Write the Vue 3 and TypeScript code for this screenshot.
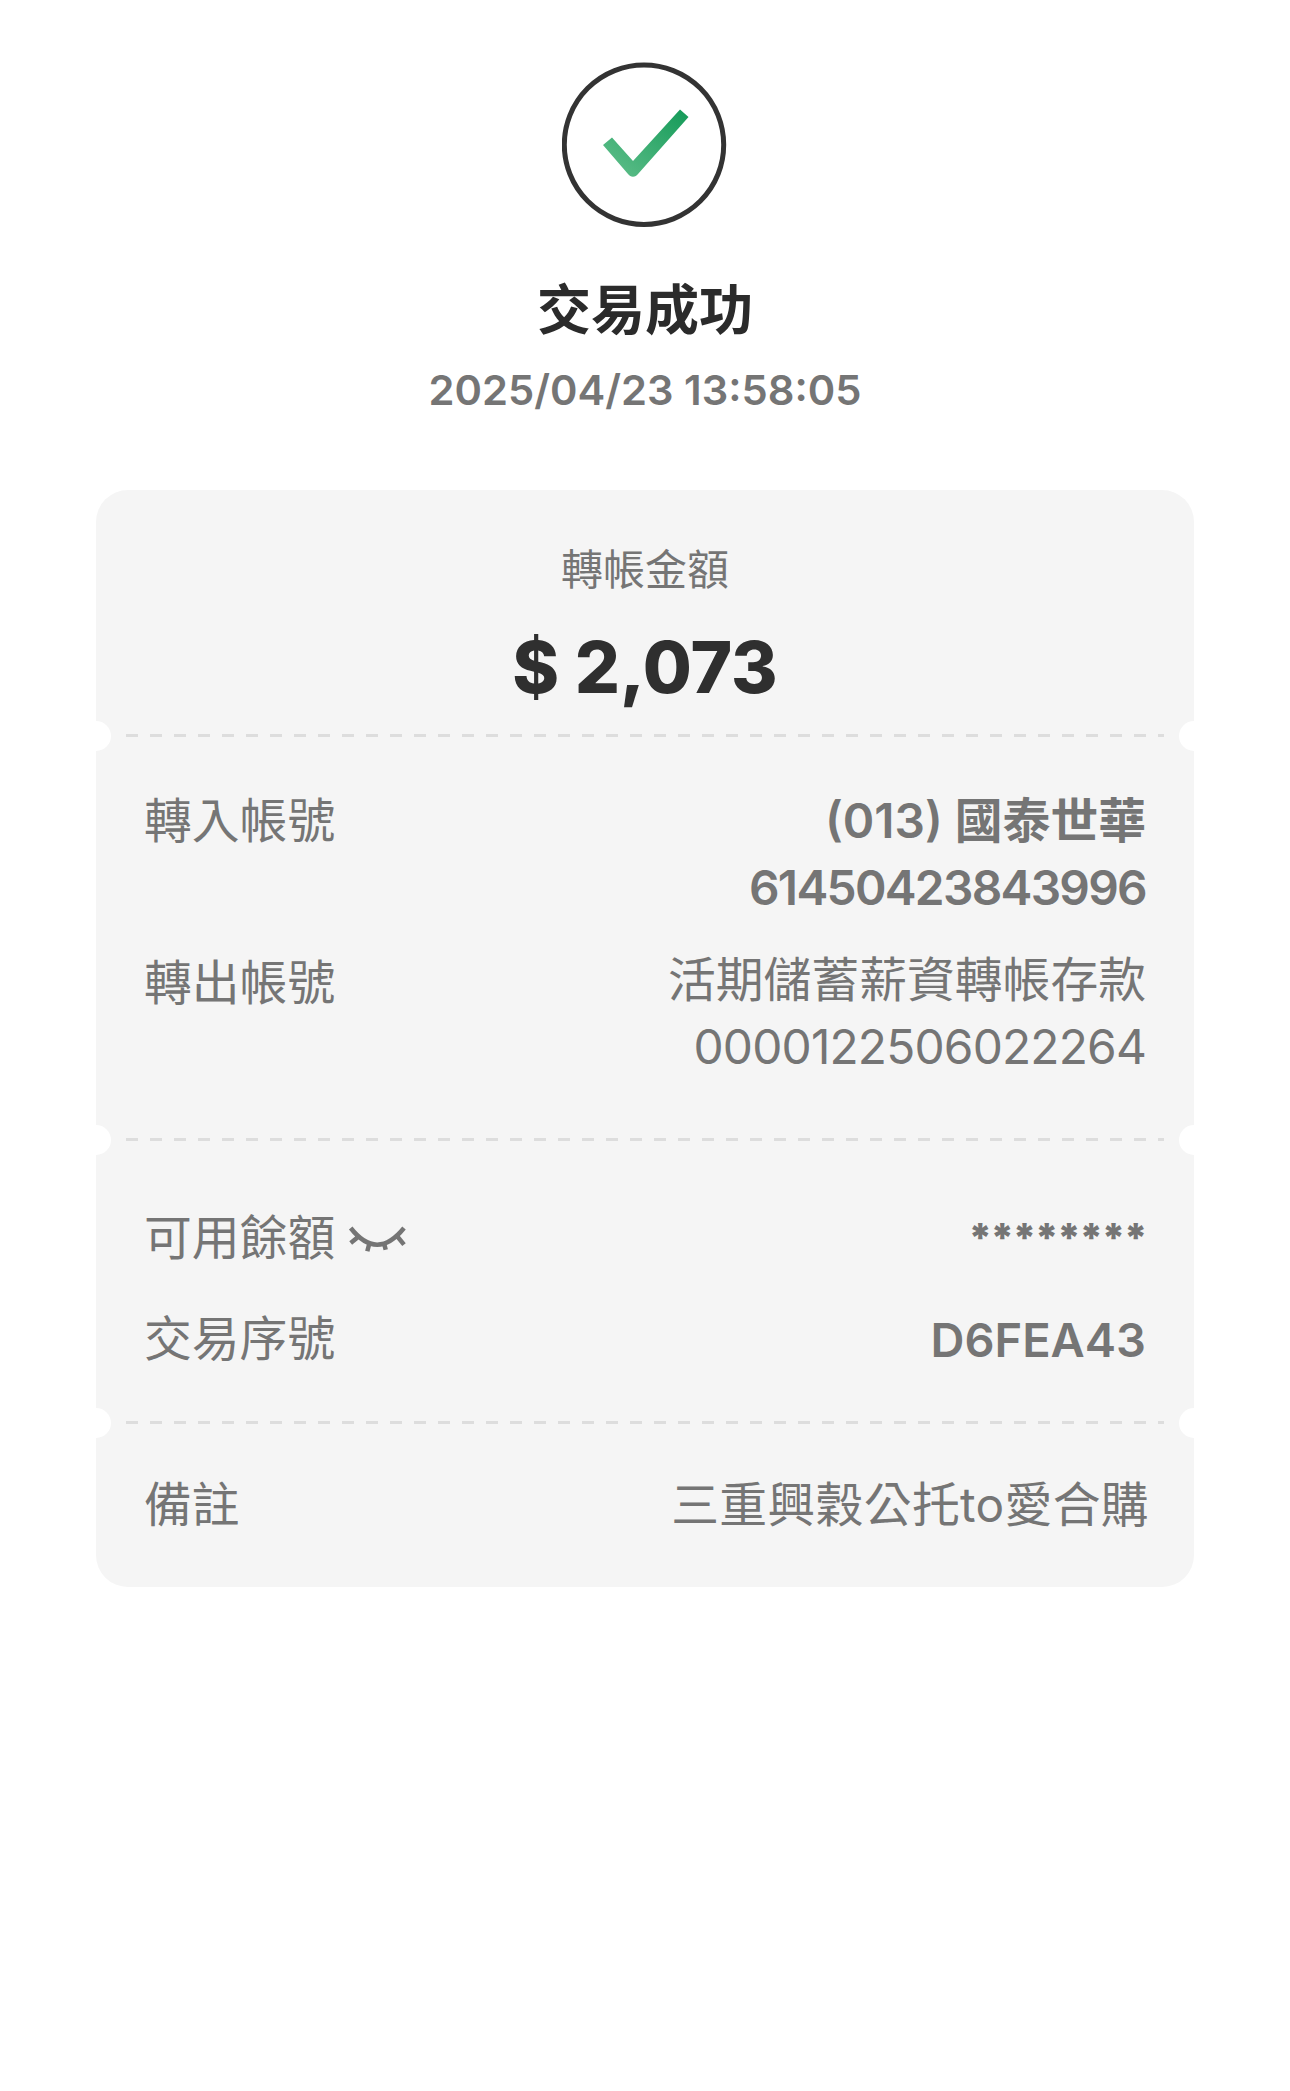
<script setup lang="ts">
const accountRows = [
  { label: '轉入帳號', lines: ['(013) 國泰世華', '61450423843996'], strong: true },
  { label: '轉出帳號', lines: ['活期儲蓄薪資轉帳存款', '0000122506022264'], strong: false },
]

const isDigits = (line: string) => /^\d+$/.test(line)
</script>

<template>
  <main class="page">
    <header class="result">
      <svg class="status-icon" viewBox="0 0 166 166" width="166" height="166">
        <defs>
          <linearGradient id="tick" x1="0" y1="1" x2="1" y2="0">
            <stop offset="0" stop-color="#62c08c" />
            <stop offset="1" stop-color="#149a58" />
          </linearGradient>
        </defs>
        <circle cx="82" cy="82.700" r="79.700" fill="#fff" stroke="#333" stroke-width="5" />
        <path d="M41 83 50 75.500 71 99 118 47.500 126.500 55 76 112a6 6 0 0 1-10 0Z" fill="url(#tick)" />
      </svg>
      <h1 class="title">交易成功</h1>
      <p class="time">2025/04/23 13:58:05</p>
    </header>

    <section class="card">
      <div class="amount">
        <div class="amount-label">轉帳金額</div>
        <div class="amount-value">$ 2,073</div>
      </div>
      <div class="divider"></div>
      <div class="accounts">
        <div v-for="row in accountRows" :key="row.label" class="row">
          <span class="label">{{ row.label }}</span>
          <div class="value" :class="{ strong: row.strong }">
            <div v-for="line in row.lines" :key="line" :class="{ digits: isDigits(line) }">{{ line }}</div>
          </div>
        </div>
      </div>
      <div class="divider"></div>
      <div class="details">
        <div class="row center">
          <span class="label with-icon">
            可用餘額
            <svg class="eye" viewBox="0 0 58 30" width="58" height="30">
              <path
                d="M2.700 4Q29 37.400 56 4M2.700 19 11 12.300M19.300 27.300 21 20.700M37.700 25.700 36 19M56 20.700 49.300 12.300"
                fill="none"
                stroke="#757575"
                stroke-width="4.500"
              />
            </svg>
          </span>
          <span class="stars">********</span>
        </div>
        <div class="row center">
          <span class="label">交易序號</span>
          <span class="value strong serial">D6FEA43</span>
        </div>
      </div>
      <div class="divider"></div>
      <div class="row note">
        <span class="label">備註</span>
        <span class="value note-text">三重興穀公托to愛合購</span>
      </div>
    </section>
  </main>
</template>

<style>
html,
body {
  margin: 0;
  background: #fff;
}
</style>

<style scoped>
.page {
  width: 1290px;
  height: 2091px;
  box-sizing: border-box;
  padding-top: 62px;
  font-family: Inter, 'Noto Sans CJK TC', sans-serif;
  color: #757575;
}

.result {
  display: flex;
  flex-direction: column;
  align-items: center;
}

.status-icon {
  display: block;
}

.title {
  margin: 50px 0 0;
  font-size: 54px;
  line-height: 66px;
  font-weight: 700;
  color: #2b2b2b;
}

.time {
  margin: 21px 0 0;
  font-size: 41.700px;
  line-height: 50px;
  font-weight: 600;
}

.card {
  margin: 75px 96px 0;
  height: 1097px;
  border-radius: 32px;
  background: #f5f5f5;
  display: flex;
  flex-direction: column;
  overflow: hidden;
}

.amount {
  height: 244px;
  display: flex;
  flex-direction: column;
  align-items: center;
  padding-top: 55px;
  box-sizing: border-box;
}

.amount-label {
  font-size: 42px;
  line-height: 50px;
}

.amount-value {
  margin-top: 28px;
  font-size: 71px;
  line-height: 88px;
  font-weight: 800;
  color: #2f2f2f;
}

.divider {
  position: relative;
  flex: none;
  height: 3px;
  margin: 0 30px;
  background: repeating-linear-gradient(90deg, #ddd 0 12px, transparent 12px 24px);
}

.divider::before,
.divider::after {
  content: '';
  position: absolute;
  top: -13.500px;
  width: 30px;
  height: 30px;
  border-radius: 50%;
  background: #fff;
}

.divider::before {
  left: -45px;
}

.divider::after {
  right: -45px;
}

.accounts {
  height: 401px;
  box-sizing: border-box;
  padding: 51px 48px 0 48px;
  display: flex;
  flex-direction: column;
  gap: 25px;
}

.row {
  display: flex;
  justify-content: space-between;
  align-items: flex-start;
  font-size: 47.800px;
  line-height: 67px;
}

.row.center {
  align-items: center;
}

.row + .row .label {
  margin-top: 3px;
}

.row.center + .row.center .label {
  margin-top: 0;
}

.value {
  text-align: right;
  white-space: nowrap;
}

.strong {
  font-weight: 600;
}

.digits {
  letter-spacing: -0.800px;
}

.strong .digits {
  letter-spacing: -1.700px;
}

.serial {
  font-size: 47px;
}

.note-text {
  letter-spacing: 0.350px;
}

.with-icon {
  display: flex;
  align-items: center;
  gap: 13px;
}

.stars {
  font-size: 39.500px;
  font-weight: 900;
  letter-spacing: -1.800px;
}

.details {
  height: 280px;
  box-sizing: border-box;
  padding: 64px 48px 0 48px;
  display: flex;
  flex-direction: column;
  gap: 34px;
}

.note {
  padding: 48px 45px 0 48px;
}
</style>
